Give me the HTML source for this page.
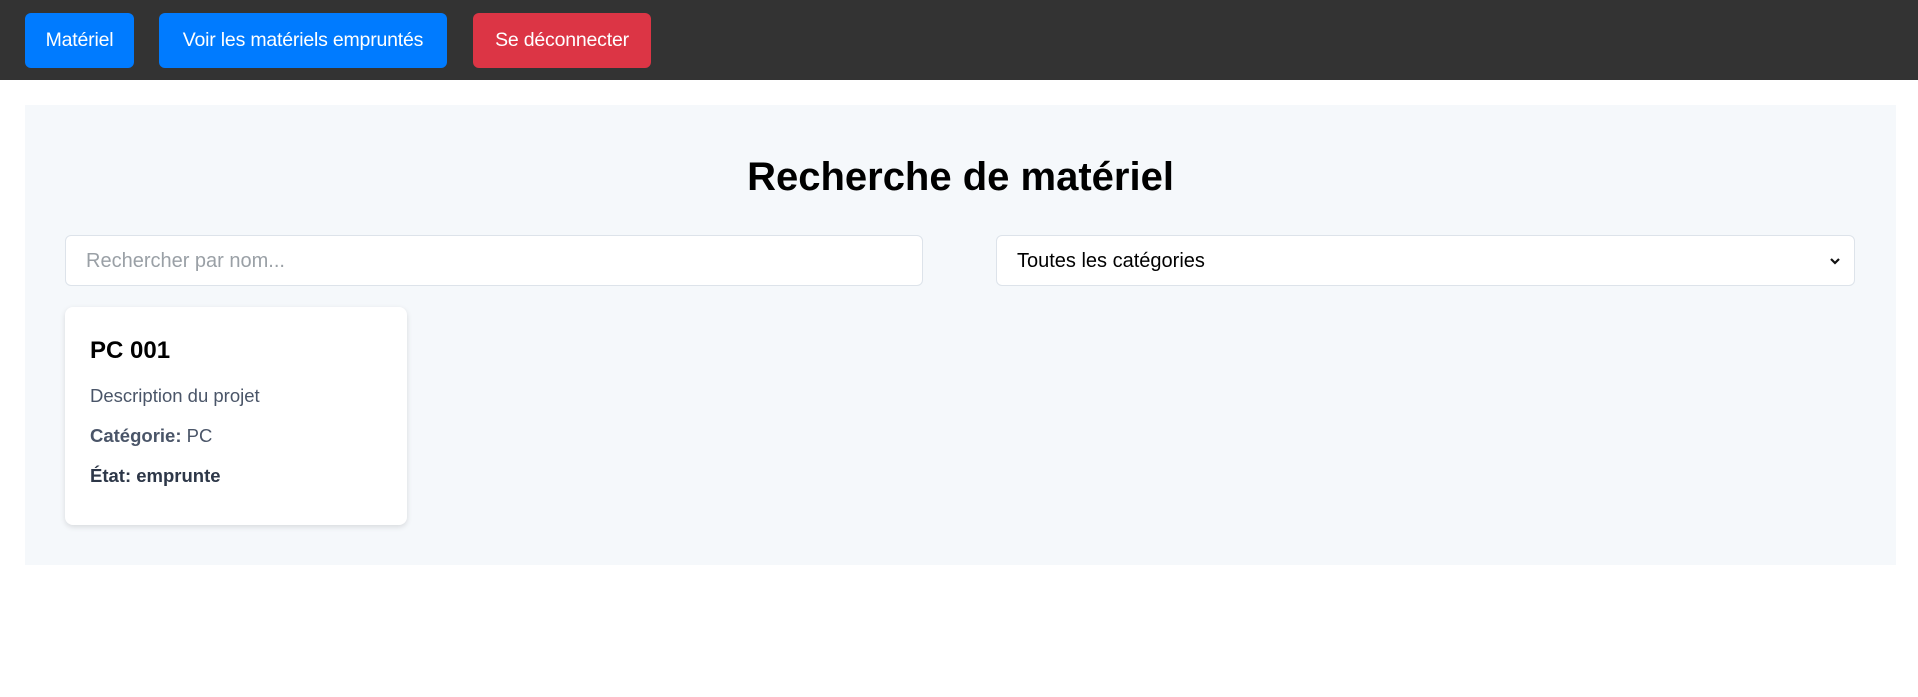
<!DOCTYPE html>
<html><head><meta charset="utf-8"><style>
*{box-sizing:border-box}
body{margin:0;background:#fff;font-family:"Liberation Sans",Arial,sans-serif;width:1918px;height:697px;overflow:hidden}
.nav{height:80px;background:#333;position:relative}
.btn{position:absolute;top:13px;height:55px;line-height:55px;border-radius:6px;color:#fff;font-size:19.5px;background:#007bff;white-space:nowrap;text-align:center;letter-spacing:-0.2px}
.red{background:#dc3545}
.box{position:absolute;left:25px;top:105px;width:1871px;height:460px;background:#f5f8fb}
h1{position:absolute;left:0;right:0;top:49px;margin:0;text-align:center;font-size:40px;line-height:46px;font-weight:bold;color:#000}
.in{position:absolute;top:130px;height:51px;background:#fff;border:1px solid #dde3ea;border-radius:6px;font-size:20px;line-height:50px;padding-left:20px}
.card{position:absolute;left:40px;top:202px;width:342px;height:218px;background:#fff;border-radius:8px;box-shadow:0 2px 6px rgba(0,0,0,.12)}
.card div{position:absolute;left:25px;white-space:nowrap}
</style></head><body>
<div class="nav"><div class="btn" style="left:25px;width:109px">Matériel</div><div class="btn" style="left:159px;width:288px">Voir les matériels empruntés</div><div class="btn red" style="left:473px;width:178px">Se déconnecter</div></div>
<div class="box">
<h1>Recherche de matériel</h1>
<div class="in" style="left:40px;width:858px;color:#9aa0a6">Rechercher par nom...</div>
<div class="in" style="left:971px;width:859px;color:#000">Toutes les catégories
<svg style="position:absolute;right:14px;top:22px" width="10" height="7" viewBox="0 0 10 7"><path d="M1 1 L5 5 L9 1" fill="none" stroke="#111" stroke-width="2.2"/></svg></div>
<div class="card">
<div style="top:30px;font-size:24px;font-weight:bold;color:#000">PC 001</div>
<div style="top:78px;font-size:18.5px;color:#4a5568">Description du projet</div>
<div style="top:118px;font-size:18.5px;color:#4a5568"><b>Catégorie:</b> PC</div>
<div style="top:158px;font-size:18.5px;color:#2d3748;font-weight:bold">État: emprunte</div>
</div>
</div>
</body></html>
